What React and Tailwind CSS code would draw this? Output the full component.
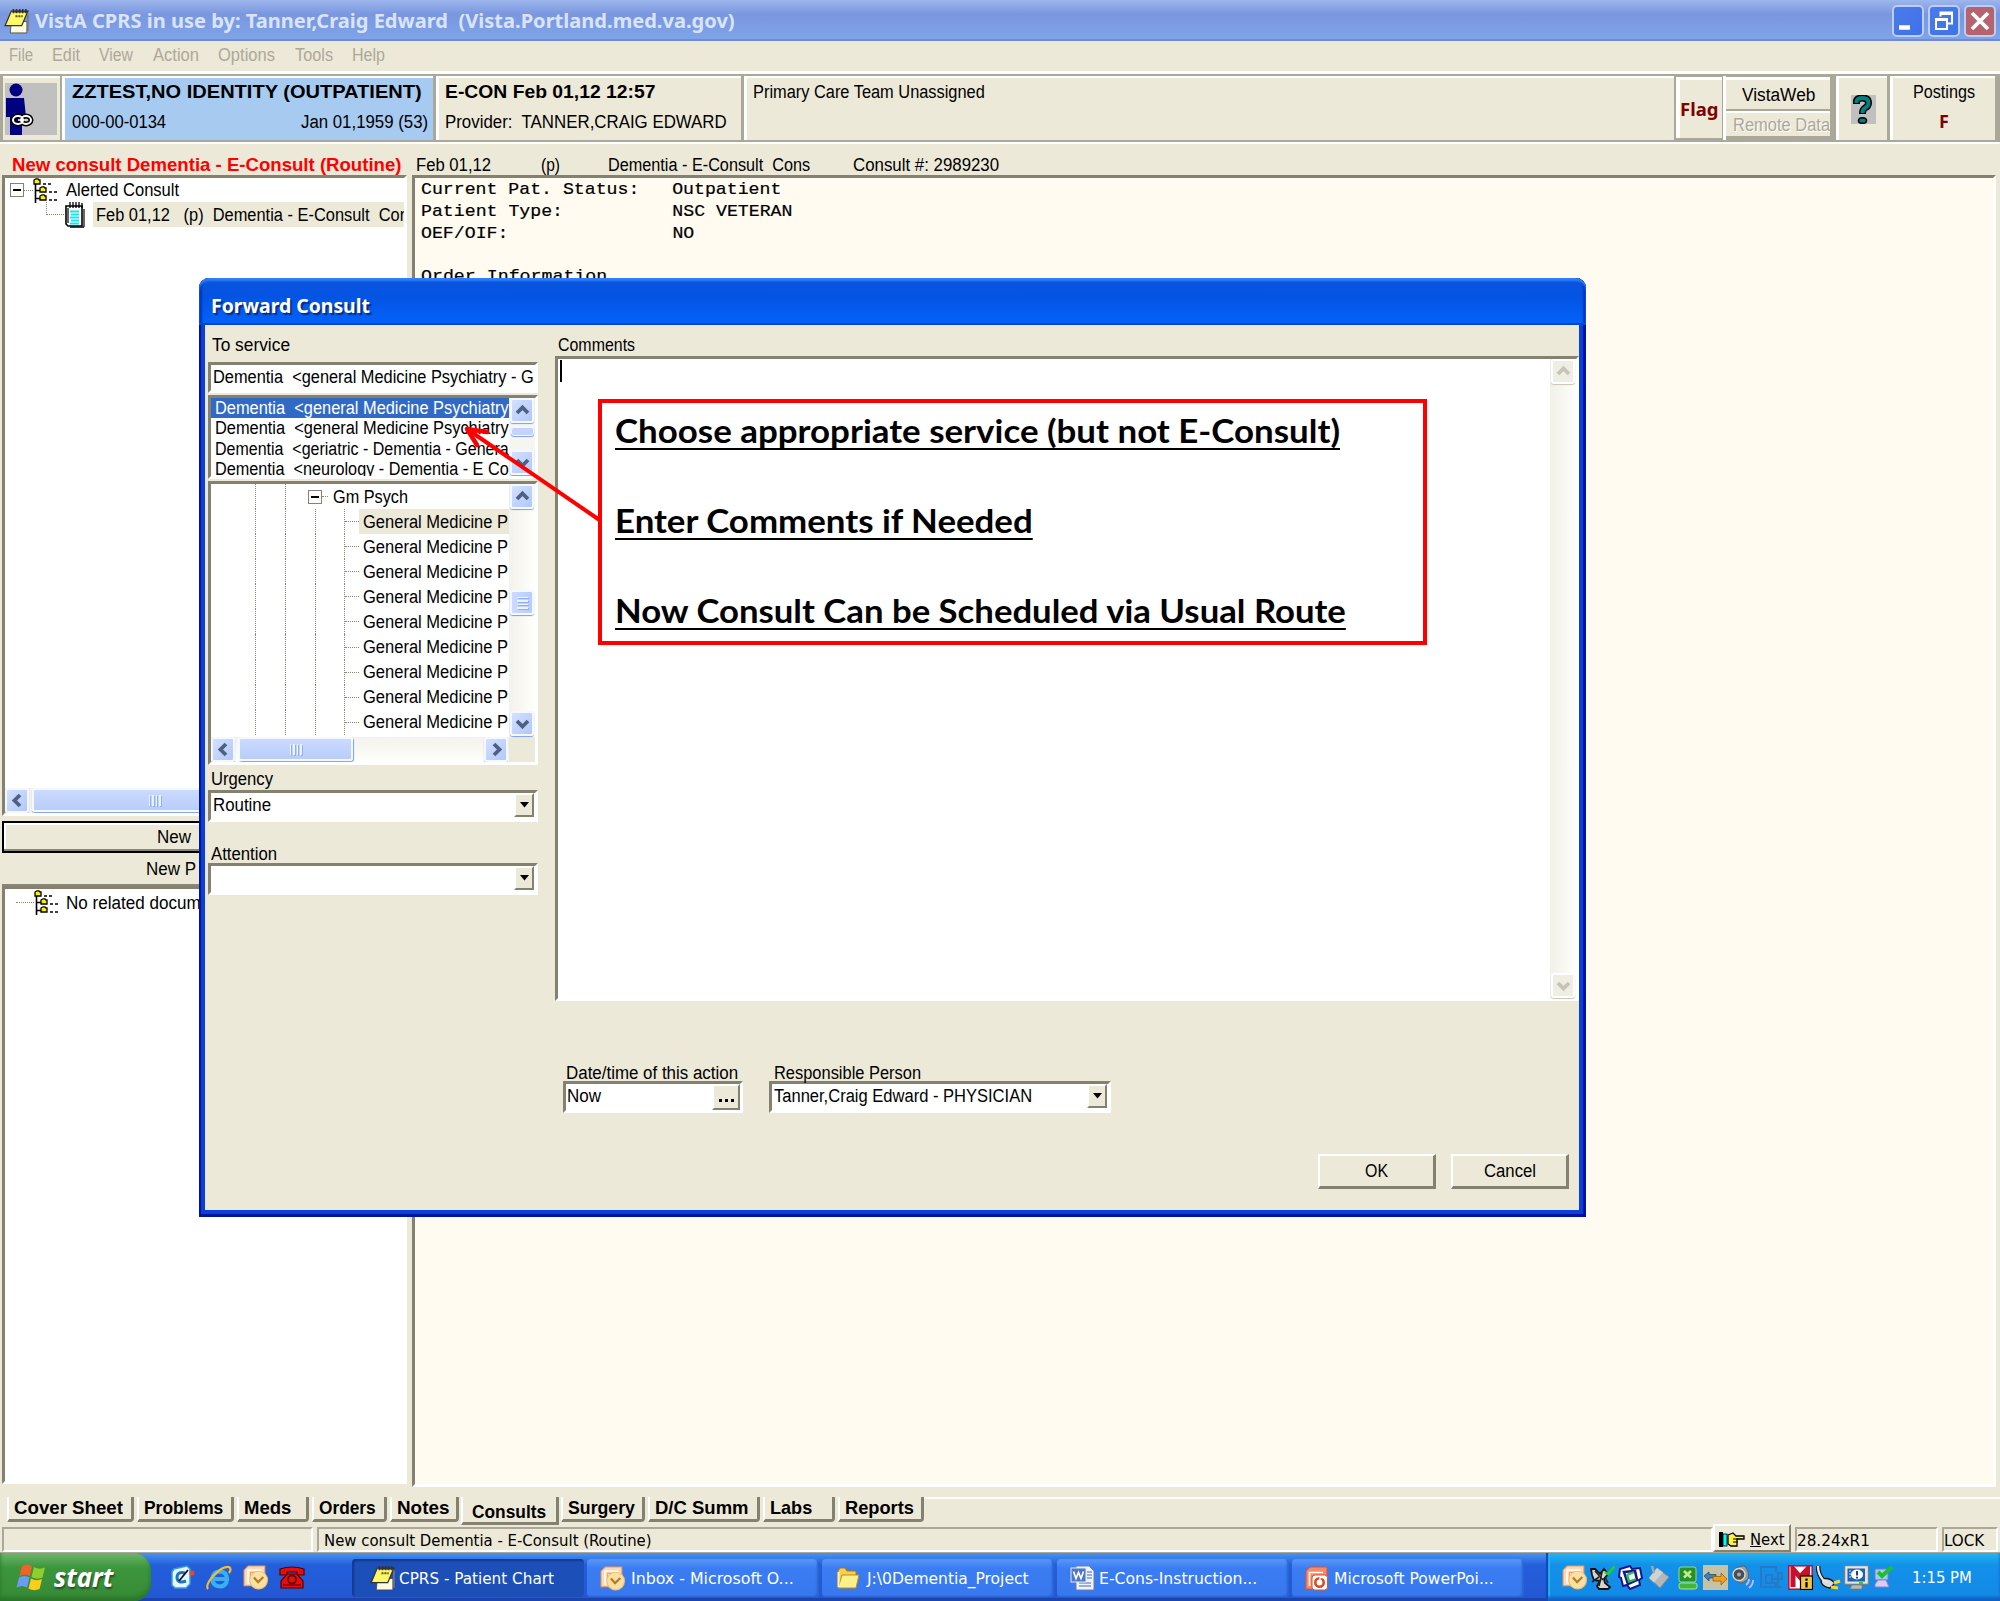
import React, { useLayoutEffect, useRef, useState } from "react";

/* Single line of text, condensed or stretched to a given width */
function Fit({ w, className = "", inner = "", children }) {
  const ref = useRef(null);
  const [scale, setScale] = useState(1);
  useLayoutEffect(() => {
    setScale(w / ref.current.offsetWidth);
  }, [w]);
  return (
    <span className={"inline-block shrink-0 whitespace-pre " + className} style={{ width: w }}>
      <span ref={ref} className={"inline-block origin-left whitespace-pre " + inner} style={{ transform: `scaleX(${scale})` }}>
        {children}
      </span>
    </span>
  );
}

const SUNKEN = "border-[3px] border-t-[#858170] border-l-[#858170] border-r-white border-b-white";
const RAISED = "border-[2px] border-t-white border-l-white border-r-[#858170] border-b-[#858170] bg-[#ece9d8]";
const TAHOMA = "font-['DejaVu_Sans_Condensed','DejaVu_Sans',sans-serif]";

const CHEVRONS = {
  up: "M6 14 L11.5 8.5 L17 14",
  down: "M6 9 L11.5 14.5 L17 9",
  left: "M14 6 L8.5 11.5 L14 17",
  right: "M9 6 L14.5 11.5 L9 17",
};

function ScrollBtn({ dir, disabled }) {
  return (
    <div
      className={
        "flex h-[25px] w-[24px] shrink-0 items-center justify-center rounded-[3px] border-2 " +
        (disabled
          ? "border-white bg-[#efede4] shadow-[0_1px_1px_#c9c5af]"
          : "border-[#f4f8ff] bg-gradient-to-br from-[#d3e0ff] to-[#b3c8f8] shadow-[0_1px_1px_#7f9fe0]")
      }
    >
      <svg width="23" height="23" viewBox="0 0 23 23" className="shrink-0">
        <path d={CHEVRONS[dir]} fill="none" stroke={disabled ? "#c6c4b8" : "#4d6185"} strokeWidth="3.8" />
      </svg>
    </div>
  );
}

function Notepad({ size = 27 }) {
  return (
    <svg width={size} height={size} viewBox="0 0 26 26" className="shrink-0">
      <path d="M8 13 H23 V24 H7 Z" fill="#fffbe0" stroke="#444" strokeWidth=".8" />
      <path d="M8 3 H24 L18 17 H2 Z" fill="#fff766" stroke="#333" strokeWidth="1.2" />
      <path d="M9 3.5 H24 M10 1 v4 M13 1 v4 M16 1 v4 M19 1 v4 M22 1 v4" stroke="#333" strokeWidth="1.5" />
      <path d="M12 8 H19" stroke="#5c5720" strokeWidth="2" strokeDasharray="2 .8" />
      <path d="M24 5 V22" stroke="#777" strokeWidth="1.5" />
    </svg>
  );
}

function TreeIcon() {
  return (
    <svg width="25" height="25" viewBox="0 0 25 25" className="shrink-0">
      <path d="M2.5 5 V25 M2.5 12.5 H8 M2.5 20.5 H8" stroke="#000" strokeWidth="1.6" fill="none" />
      <g fill="#ffef00" stroke="#000" strokeWidth="1.3">
        <path d="M1 2 L3 .8 H5 L6 2 H7 V6 H1 Z" />
        <path d="M7 10 L9 8.8 H11 L12 10 H13 V14 H7 Z" />
        <path d="M7 18 L9 16.8 H11 L12 18 H13 V22 H7 Z" />
      </g>
      <path d="M10 6 h3 M15 6 h3 M16 14 h3 M21 14 h3 M16 22 h3 M21 22 h3" stroke="#000" strokeWidth="1.6" />
    </svg>
  );
}

function DocIcon() {
  return (
    <svg width="22" height="26" viewBox="0 0 22 26" className="shrink-0">
      <path d="M2 4 H18 V24 H4 L2 22 Z" fill="#fff" stroke="#000" strokeWidth="1.6" />
      <path d="M4 6 V21 M20 7 V25 M6 25.2 H20" stroke="#000" strokeWidth="1.2" />
      <path d="M6 0 V6 M9 0 V6 M12 0 V6 M15 0 V6 M18 1 V6" stroke="#000" strokeWidth="1.3" />
      <path d="M6 9.5 H15 M7 12.5 H15 M6 15.5 H15 M7 18.5 H15 M6 21.5 H15" stroke="#14e6f0" strokeWidth="1.8" />
    </svg>
  );
}

function Outlook({ size = 25 }) {
  return (
    <svg width={size} height={size} viewBox="0 0 24 24" className="shrink-0">
      <path d="M5 1 H21 V20 H1 V5 Z" fill="#fbd9b5" stroke="#ee9a55" strokeWidth="1" />
      <path d="M4 4 H18 V8 H8 V18 H4 Z" fill="#fff" opacity=".8" />
      <path d="M7 17 V7 H14" fill="none" stroke="#f0a465" strokeWidth="1.3" />
      <circle cx="15" cy="14.500" r="8.500" fill="#fbe0a4" stroke="#ecc273" strokeWidth="1" />
      <path d="M10.500 12 L14.500 16.500 L19.500 11.500" fill="none" stroke="#b07c28" strokeWidth="2.2" />
    </svg>
  );
}

function Folder() {
  return (
    <svg width="24" height="25" viewBox="0 0 24 25" className="shrink-0">
      <path d="M2 5 L4 2 H9 L11 5 H20 V20 H2 Z" fill="#f6cf4f" stroke="#a97b14" />
      <path d="M2 22 L6 9 H23 L20 22 Z" fill="#fff08a" stroke="#b98c22" />
      <path d="M2.500 21 V6" stroke="#fff3b0" strokeWidth="2" />
    </svg>
  );
}

function Word() {
  return (
    <svg width="25" height="26" viewBox="0 0 25 26" className="shrink-0">
      <path d="M6 1 H19 L24 6 V25 H6 Z" fill="#eef3fc" stroke="#6b7fa8" />
      <path d="M17 7 H22 M17 10 H22 M17 13 H22 M9 18 H21 M9 21 H21" stroke="#7e98c9" strokeWidth="1.3" />
      <rect x="1" y="3" width="15" height="14" fill="#4f78c8" stroke="#dfe8f8" />
      <path d="M3.5 6.5 L6 13.5 L8.5 7.5 L11 13.5 L13.5 6.5" fill="none" stroke="#fff" strokeWidth="1.7" />
    </svg>
  );
}

function Ppt() {
  return (
    <svg width="24" height="25" viewBox="0 0 24 25" className="shrink-0">
      <path d="M5 1 H22 V23 H1 V5 Z" fill="#f58a66" stroke="#e0522a" />
      <path d="M4.500 20 V6.500 H18" fill="none" stroke="#fff" strokeWidth="1.6" />
      <rect x="7" y="9" width="15.500" height="15" rx="3" fill="#fff" stroke="#e0522a" />
      <circle cx="14.500" cy="16.500" r="4.200" fill="none" stroke="#dd4a20" strokeWidth="2.600" />
      <path d="M15 16 V11.500 H20" stroke="#fff" strokeWidth="1.400" fill="none" />
    </svg>
  );
}

function WinFlag() {
  return (
    <svg width="30" height="29" viewBox="0 0 30 29" className="shrink-0">
      <path d="M6 3 Q11 0 16 3 L14 13 Q9 10 3.5 13 Z" fill="#f0622a" />
      <path d="M18 4 Q23 7 29 4.5 L26.5 14.5 Q21 17 15.5 14 Z" fill="#8fce2c" />
      <path d="M3 14.5 Q8.500 11.500 13.500 14.500 L11 24.500 Q6 21.500 .5 24.500 Z" fill="#6b9cf5" />
      <path d="M15 15.500 Q20.500 18.500 26 16 L23.500 26 Q18 28.500 12.500 25.500 Z" fill="#fccd1c" />
    </svg>
  );
}

function TrayIcons() {
  const box = "h-[25px] w-[25px] shrink-0";
  return (
    <div className="flex items-center gap-[3.2px]">
      <Outlook size={25} />
      <svg className={box} viewBox="0 0 25 25">
        <path d="M1 4 L5 4 L10 9 L14 4 L18 9 L14 14 L15 18 L20 22 L18 24 H9 L7 21 L10 16 L4 15 L2 10 Z" fill="#d4d4d4" stroke="#111" strokeWidth="1.800" />
        <path d="M5 6 L13 15 M2 17 L9 12 M12 7 L9 21 M15 12 L18 18" stroke="#222" strokeWidth="1.600" />
        <path d="M15 7 L18 9 L25 1" fill="none" stroke="#1ed21e" strokeWidth="2.600" />
      </svg>
      <svg className={box} viewBox="0 0 25 25">
        <path d="M2 4 L12 1 L14 4 L22 3 L24 13 L21 15 L22 20 L12 24 L9 20 L5 21 L3 13 L1 12 Z" fill="#fff" stroke="#16168c" strokeWidth="2" />
        <path d="M6 7 L17 6 L19 15 L10 19 Z" fill="none" stroke="#16168c" strokeWidth="2.600" />
        <path d="M9 10 L16 7 M10 17 L18 14 M9 10 L11 16" stroke="#23c04a" strokeWidth="2.400" />
      </svg>
      <svg className={box} viewBox="0 0 25 25">
        <path d="M10 3 L22 12 L13 23 L2 13 Z" fill="#b4b7ba" stroke="#85898d" />
        <path d="M10 3 L16 7.500 L7 17.500 L2 13 Z" fill="#cfd1d2" />
        <path d="M5 1 L7 8" stroke="#a5a8aa" strokeWidth="2.400" />
      </svg>
      <svg className={box} viewBox="0 0 25 25">
        <rect x="4" y="2" width="17" height="15" rx="2" fill="#2a8f2a" stroke="#8be27b" />
        <path d="M9 6 L16 12.500 M16 6 L9 12.500" stroke="#b9ef8c" strokeWidth="2.600" />
        <rect x="4" y="18" width="18" height="6" rx="2" fill="#46b53a" stroke="#9bea8b" />
      </svg>
      <svg className={box} viewBox="0 0 25 25">
        <rect width="25" height="25" fill="#c5c2a6" />
        <path d="M1 11 L6 7 V9.500 H13 V13 H6 V16 Z" fill="#3d83b8" stroke="#1d4a77" strokeWidth=".8" />
        <path d="M24 14 L18 8 V11.500 H10 V16 H18 V20 Z" fill="#f0a01e" stroke="#9c6208" strokeWidth=".8" />
      </svg>
      <svg className={box} viewBox="0 0 25 25">
        <path d="M2 6 Q6 1 13 1 Q19 6 17 14 Q13 18 9 18 Q2 14 2 6 Z" fill="#9a9ea3" stroke="#5e6165" />
        <circle cx="8" cy="9.500" r="6" fill="#4b4e52" stroke="#d6d8da" strokeWidth="1.400" />
        <circle cx="8" cy="9.500" r="2" fill="#aaa" />
        <path d="M15 20 Q18 18 18 14 M18 23 Q22 20 22 15" fill="none" stroke="#c9b8ff" strokeWidth="1.800" />
      </svg>
      <svg className={box} viewBox="0 0 25 25">
        <path d="M17 7 V2 H2 V22 H17 V18 H7 V10 H13 V18 M13 14 H23 V8 H19 V22 H23" fill="none" stroke="#2679c4" strokeWidth="2" />
      </svg>
      <svg className={box} viewBox="0 0 25 25">
        <rect x=".8" y=".8" width="23.400" height="23.400" fill="#fff" stroke="#c8102e" strokeWidth="1.600" />
        <path d="M5 22 V4 L12 12 L19.500 4 V22" fill="none" stroke="#c8102e" strokeWidth="5" />
        <rect x="12.500" y="11" width="12" height="13.500" fill="#f3c53c" stroke="#000" strokeWidth="1.200" />
        <path d="M18.500 13.500 v2.200 M18.500 17 v5.500" stroke="#000" strokeWidth="2.200" />
      </svg>
      <svg className={box} viewBox="0 0 25 25">
        <path d="M2 1 Q2 9 7 15 L17 20" fill="none" stroke="#111" strokeWidth="4.600" />
        <path d="M7 14 Q13 12 19 18 L14 23 Q7 22 5 17 Z" fill="#ddd" stroke="#111" strokeWidth="1.300" />
        <path d="M2 1 Q2 9 7 15 L12 17" fill="none" stroke="#e6e6e6" strokeWidth="2.400" />
        <path d="M18 18 L24 16 M15 22 L22 23" stroke="#f2d43a" strokeWidth="3.200" />
      </svg>
      <svg className={box} viewBox="0 0 25 25">
        <rect x=".7" y=".7" width="23.600" height="18.500" fill="#e7e5dc" stroke="#7d7b73" />
        <rect x="3.500" y="3.500" width="17.500" height="13" fill="#1c62b8" />
        <ellipse cx="13" cy="9.500" rx="6" ry="5" fill="#fff" />
        <path d="M13 6 v4.500 M13 11.800 v1.600" stroke="#1440a0" strokeWidth="2" />
        <path d="M5 6 h2 M5 9 h2 M5 12 h2" stroke="#cfe2ff" />
        <path d="M8 20 H18 V24 H6 Z" fill="#bdbbb2" stroke="#7d7b73" strokeWidth=".8" />
        <path d="M15 18 h4" stroke="#25d32e" strokeWidth="2" />
      </svg>
      <svg className={box} viewBox="0 0 25 25">
        <rect x="3" y="4" width="13" height="11" rx="1" fill="#a9c9f0" stroke="#7c74c4" />
        <path d="M3 19 L6 15 H14 L17 22 H3 Z" fill="#d9cdf5" stroke="#8b7fce" />
        <path d="M6 7 L10 11 L20 2" fill="none" stroke="#16c427" strokeWidth="4" />
      </svg>
    </div>
  );
}

function TitleBtn({ children, red }) {
  return (
    <div
      className={
        "flex h-[32px] w-[32px] items-center justify-center rounded-[5px] border-2 border-[#bccdf6] " +
        (red ? "bg-[#b5646f]" : "bg-gradient-to-br from-[#4a7bea] to-[#3f72e8]")
      }
    >
      <svg width="28" height="28" viewBox="0 0 28 28">{children}</svg>
    </div>
  );
}

function ComboArrow() {
  return (
    <div className={"flex h-[24px] w-[20px] shrink-0 items-center justify-center " + RAISED}>
      <svg width="9" height="6" viewBox="0 0 9 6">
        <path d="M0 0 H9 L4.500 5.500 Z" fill="#000" />
      </svg>
    </div>
  );
}

const MENUS = [
  ["File", 24, "ml-[9px]"],
  ["Edit", 28, "ml-[19px]"],
  ["View", 34, "ml-[19px]"],
  ["Action", 46, "ml-[20px]"],
  ["Options", 57, "ml-[19px]"],
  ["Tools", 38, "ml-[20px]"],
  ["Help", 33, "ml-[19px]"],
];

function MainHeader() {
  return (
    <>
      <div className="flex h-[41px] items-center bg-gradient-to-b from-[#9db6ec] via-[#7a96df] via-35% to-[#7fa5e8] pt-[1px] pr-[4px] pl-[3px] shadow-[inset_0_-2px_0_#7288d8]">
        <Notepad />
        <Fit w={700} className="ml-[5px] font-['Noto_Sans','Open_Sans',sans-serif] text-[20px] leading-6 font-bold text-[#d9e4f9]">
          {"VistA CPRS in use by: Tanner,Craig Edward  (Vista.Portland.med.va.gov)"}
        </Fit>
        <div className="ml-auto flex gap-[4px]">
          <TitleBtn><path d="M5 20.500 H16" stroke="#fff" strokeWidth="4.500" /></TitleBtn>
          <TitleBtn>
            <path d="M10.500 9.500 V5.500 H22 V16.500 H18" fill="none" stroke="#fff" strokeWidth="2" />
            <path d="M10 6.500 H22" stroke="#fff" strokeWidth="3" />
            <rect x="6" y="12" width="11" height="10" fill="none" stroke="#fff" strokeWidth="2" />
            <path d="M5 12.500 H18" stroke="#fff" strokeWidth="3" />
          </TitleBtn>
          <TitleBtn red><path d="M6 6 L22 22 M22 6 L6 22" stroke="#fff" strokeWidth="3.800" /></TitleBtn>
        </div>
      </div>
      <div className="flex h-[30px] items-center pb-[2px] text-[#aca899]">
        {MENUS.map(([t, w, m]) => <Fit key={t} w={w} className={m}>{t}</Fit>)}
      </div>
      <div className="h-[5px] border-b-2 border-[#aca899] bg-white" />
      <div className="flex h-[64px] bg-[#aca899] pl-[3px]">
        <div className="flex w-[57px] items-center border-t-2 border-white bg-[#ece9d8] pl-[2px]">
          <svg width="52" height="52" viewBox="0 0 52 52">
            <rect width="52" height="52" fill="#c0c0c0" />
            <circle cx="11" cy="7" r="6.500" fill="#000080" />
            <path d="M1 15 H19 L21 34 H17 V52 H5 V34 H1 Z" fill="#000080" />
            <g fill="none" stroke="#000" strokeWidth="5"><ellipse cx="13" cy="37" rx="5" ry="4" /><ellipse cx="21" cy="37" rx="5" ry="4" /></g>
            <g fill="none" stroke="#fff" strokeWidth="2"><ellipse cx="13" cy="37" rx="5" ry="4" /><ellipse cx="21" cy="37" rx="5" ry="4" /></g>
            <path d="M13 37 h8" stroke="#fff" strokeWidth="1.500" />
          </svg>
        </div>
        <div className="ml-[2px] flex w-[371px] flex-col border-t-2 border-l-3 border-white bg-[#a6caf0] pt-[2px] pr-[5px] pl-[7px]">
          <Fit w={350} className="text-[18.500px] leading-[24px] font-bold">ZZTEST,NO IDENTITY (OUTPATIENT)</Fit>
          <div className="mt-[6px] flex justify-between leading-[24px]">
            <Fit w={94}>000-00-0134</Fit>
            <Fit w={127}>Jan 01,1959 (53)</Fit>
          </div>
        </div>
        <div className="ml-[3px] flex w-[305px] flex-col border-t-2 border-l-3 border-white bg-[#ece9d8] pt-[2px] pl-[6px]">
          <Fit w={211} className="text-[18.500px] leading-[24px] font-bold">E-CON Feb 01,12 12:57</Fit>
          <Fit w={282} className="mt-[6px] leading-[24px]">{"Provider:  TANNER,CRAIG EDWARD"}</Fit>
        </div>
        <div className="ml-[3px] w-[930px] border-t-2 border-l-3 border-white bg-[#ece9d8] pt-[2px] pl-[6px]">
          <Fit w={232} className="leading-[24px]">Primary Care Team Unassigned</Fit>
        </div>
        <div className="mt-[1px] ml-[2px] mb-[2px] flex w-[46px] items-center border-t-3 border-l-4 border-white bg-[#ece9d8]">
          <Fit w={38} className="font-['Noto_Sans',sans-serif] text-[18px] leading-6 font-bold text-[#800000]">Flag</Fit>
        </div>
        <div className="ml-[1px] flex w-[107px] flex-col gap-[2px] border-l-3 border-white pt-[1px]">
          <div className="flex h-[32px] items-center justify-center border-t-3 border-white bg-[#ece9d8]">
            <Fit w={73}>VistaWeb</Fit>
          </div>
          <div className="flex h-[25px] items-center overflow-hidden border-t-2 border-white bg-[#ece9d8] pl-[7px]">
            <Fit w={97} className="text-[#aca899] [text-shadow:1px_1px_0_#fff]">Remote Data</Fit>
          </div>
        </div>
        <div className="ml-[6px] flex w-[51px] items-center justify-center border-t-2 border-l-3 border-white bg-[#ece9d8]">
          <svg width="25" height="29" viewBox="0 0 25 29">
            <rect width="25" height="29" fill="#c0c0c0" />
            <path d="M5.500 9 V6 Q6 3 11.500 3 Q17.500 3 17.500 8 Q17.500 11 14 13 Q11.500 14.500 11.500 19" fill="none" stroke="#000" strokeWidth="7" />
            <path d="M5.500 8 V6.500 Q6 3 11.500 3 Q17.500 3 17.500 8 Q17.500 11 14 13 Q11.500 14.500 11.500 18" fill="none" stroke="#008080" strokeWidth="4" />
            <ellipse cx="11.500" cy="25.500" rx="4" ry="2.800" fill="#008080" stroke="#000" strokeWidth="1.500" />
          </svg>
        </div>
        <div className="ml-[3px] flex w-[105px] flex-col items-center border-t-2 border-l-3 border-white bg-[#ece9d8] pt-[2px]">
          <Fit w={62} className="leading-[24px]">Postings</Fit>
          <span className="mt-[5px] font-['Noto_Sans',sans-serif] text-[18px] leading-[24px] font-bold text-[#800000]">F</span>
        </div>
      </div>
      <div className="h-[4px] border-t-2 border-b-2 border-t-[#aca899] border-b-white" />
      <div className="flex h-[31px] items-center pt-[10px] pl-[12px] leading-5">
        <Fit w={389} className="text-[18.500px] font-bold text-[#ff0000]">New consult Dementia - E-Consult (Routine)</Fit>
        <Fit w={75} className="ml-[15px]">Feb 01,12</Fit>
        <Fit w={19} className="ml-[50px]">(p)</Fit>
        <Fit w={202} className="ml-[48px]">{"Dementia - E-Consult  Cons"}</Fit>
        <Fit w={146} className="ml-[43px]">Consult #: 2989230</Fit>
      </div>
    </>
  );
}

function LeftPane() {
  return (
    <div className="flex w-[405px] shrink-0 flex-col">
      <div className={"flex h-[641px] flex-col overflow-hidden bg-white " + SUNKEN}>
        <div className="flex h-[24px] items-center pl-[5px]">
          <div className="flex h-[14px] w-[14px] items-center justify-center border border-[#848270]">
            <div className="h-[2px] w-[8px] bg-black" />
          </div>
          <div className="w-[9px] border-t border-dotted border-[#8a8677]" />
          <TreeIcon />
          <Fit w={113} className="ml-[8px]">Alerted Consult</Fit>
        </div>
        <div className="flex h-[25px] items-center pl-[41px]">
          <div className="h-[13px] w-[18px] self-start border-b border-l border-dotted border-[#8a8677]" />
          <DocIcon />
          <div className="ml-[7px] flex h-[25px] w-[312px] items-center overflow-hidden bg-[#ece9d8] pl-[3px]">
            <Fit w={309}>{"Feb 01,12   (p)  Dementia - E-Consult  Cor"}</Fit>
          </div>
        </div>
        <div className="mt-auto flex h-[25px] gap-[3px] bg-[#f3f2ec]">
          <ScrollBtn dir="left" />
          <div className="flex h-[24px] w-[245px] items-center justify-center rounded-[3px] border-2 border-[#f4f8ff] bg-gradient-to-b from-[#cbdaff] to-[#b9cdfa] shadow-[0_1px_1px_#7f9fe0]">
            <div className="flex gap-[2px]">
              {[0, 1, 2, 3].map((i) => <div key={i} className="h-[11px] w-[1.500px] bg-[#eef4ff] shadow-[1px_1px_0_#8cb0f8]" />)}
            </div>
          </div>
        </div>
      </div>
      <div className="mt-[5px] flex h-[32px] items-center border-2 border-black bg-[#ece9d8] pl-[153px] shadow-[inset_0_-2px_0_#8b8778,inset_2px_2px_0_#fff]">
        <Fit w={34}>New</Fit>
      </div>
      <div className="mt-[1px] flex h-[32px] items-center border-b-2 border-[#8b8778] pl-[144px]">
        <Fit w={50}>New P</Fit>
      </div>
      <div className={"flex h-[598px] flex-col bg-white " + SUNKEN}>
        <div className="mt-[1px] flex h-[25px] items-center pl-[11px]">
          <div className="w-[18px] border-t border-dotted border-[#8a8677]" />
          <TreeIcon />
          <Fit w={144} className="ml-[7px]">No related docume</Fit>
        </div>
      </div>
    </div>
  );
}

const REPORT = [
  "Current Pat. Status:   Outpatient",
  "Patient Type:          NSC VETERAN",
  "OEF/OIF:               NO",
  " ",
  "Order Information",
];

function ReportPane() {
  return (
    <div className={"ml-[5px] flex h-[1312px] w-[1584px] flex-col bg-[#fffbf0] pt-[1px] pl-[6px] " + SUNKEN}>
      {REPORT.map((t, i) => (
        <Fit key={i} w={t.length * 10.93} className="h-[21.800px] font-['Liberation_Mono',monospace] text-[17px] leading-[22px] [-webkit-text-stroke:0.2px_#000]">{t}</Fit>
      ))}
    </div>
  );
}

const TABS = [
  ["Cover Sheet", 109, "w-[127px]"],
  ["Problems", 79, "w-[97px] ml-[3px]"],
  ["Meds", 47, "w-[72px] ml-[3px]"],
  ["Orders", 57, "w-[75px] ml-[3px]"],
  ["Notes", 52, "w-[69px] ml-[3px]"],
  ["Consults", 74, ""],
  ["Surgery", 67, "w-[84px] ml-[2px]"],
  ["D/C Summ", 94, "w-[112px] ml-[3px]"],
  ["Labs", 42, "w-[72px] ml-[3px]"],
  ["Reports", 69, "w-[86px] ml-[3px]"],
];

function BottomTabs() {
  return (
    <div className="flex h-[40px] items-start pt-[10px] pl-[7px] text-[18.500px] font-bold">
      {TABS.map(([t, w, c]) =>
        t === "Consults" ? (
          <div key={t} className="ml-[2px] flex h-[28px] w-[98px] items-center border-r-3 border-b-3 border-l-2 border-r-[#858170] border-b-[#858170] border-l-white pt-[4px] pl-[9px]">
            <Fit w={w}>{t}</Fit>
          </div>
        ) : (
          <div key={t} className={"flex h-[25px] items-center rounded-br-[4px] border-r-3 border-b-3 border-l-2 border-r-[#858170] border-b-[#858170] border-l-white pl-[5px] " + c}>
            <Fit w={w}>{t}</Fit>
          </div>
        )
      )}
      <div className="h-[2px] flex-1 bg-white" />
    </div>
  );
}

function StatusBar() {
  const cell = "h-[25px] border-2 border-t-[#aca899] border-l-[#aca899] border-r-white border-b-white flex items-center pt-[2px]";
  return (
    <div className="flex h-[26px] items-start border-b border-[#aca899] pl-[2px]">
      <div className={cell + " w-[311px]"} />
      <div className={cell + " ml-[4px] w-[1396px] pl-[5px]"}>
        <Fit w={328} className="font-['DejaVu_Sans_Condensed',sans-serif] text-[16px]">New consult Dementia - E-Consult (Routine)</Fit>
      </div>
      <div className={"-mt-[3px] flex h-[28px] w-[78px] items-center pt-[3px] pl-[4px] " + RAISED}>
        <svg width="26" height="18" viewBox="0 0 26 18">
          <rect x="0" y="1" width="4" height="15" fill="#000" />
          <rect x="4" y="3" width="4" height="12" fill="#0ff" stroke="#000" strokeWidth=".8" />
          <path d="M9 4 L14 2 L17 5 H25 V8 H18 V15 H12 L9 13 Z" fill="#ffef4a" stroke="#000" strokeWidth="1.300" />
          <path d="M14 8 H19 M14 11 H19" stroke="#000" />
        </svg>
        <Fit w={35} className="ml-[5px] font-['DejaVu_Sans_Condensed',sans-serif] text-[16px]"><span className="underline">N</span>ext</Fit>
      </div>
      <div className={cell + " ml-[4px] w-[143px]"}>
        <Fit w={73} className="font-['DejaVu_Sans_Condensed',sans-serif] text-[16px]">28.24xR1</Fit>
      </div>
      <div className={cell + " ml-[4px] w-[56px]"}>
        <Fit w={40} className="font-['DejaVu_Sans_Condensed',sans-serif] text-[16px]">LOCK</Fit>
      </div>
    </div>
  );
}

const TASKS = [
  ["CPRS - Patient Chart", 155, <Notepad key="i" />, true, "pl-[17px] gap-[3px]"],
  ["Inbox - Microsoft O...", 163, <Outlook key="i" />, false, "pl-[13px] gap-[6px]"],
  ["J:\\0Dementia_Project", 162, <Folder key="i" />, false, "pl-[14px] gap-[7px]"],
  ["E-Cons-Instruction...", 158, <Word key="i" />, false, "pl-[13px] gap-[4px]"],
  ["Microsoft PowerPoi...", 160, <Ppt key="i" />, false, "pl-[13px] gap-[5px]"],
];

function Taskbar() {
  return (
    <div className="flex h-[48px] bg-gradient-to-b from-[#4a94f0] via-[#245edb] via-25% to-[#2257d2] shadow-[inset_0_-3px_0_#1b44ae]">
      <div className="flex h-[48px] w-[151px] items-center rounded-r-[18px] bg-gradient-to-b from-[#6fb56d] via-[#3c963c] via-30% to-[#378a36] pl-[16px] shadow-[inset_0_-4px_4px_#2a742a]">
        <WinFlag />
        <Fit w={59} className="ml-[8px] font-['Noto_Sans',sans-serif] text-[27px] leading-[30px] font-bold text-white italic [text-shadow:1px_2px_2px_#234f23]">start</Fit>
      </div>
      <div className="flex w-[201px] items-center gap-[11px] pt-[1px] pl-[19px]">
        <svg width="25" height="25" viewBox="0 0 25 25">
          <path d="M4 4 L17 1 L20 4 V19 L16 23 H5 L2 20 V7 Z" fill="#e8f6ff" stroke="#35a0dc" strokeWidth="1.500" />
          <path d="M15 8 Q7 6 7 13 Q8 19 16 16" fill="none" stroke="#1878c6" strokeWidth="3" />
          <path d="M9 16 L18 5" stroke="#111" strokeWidth="1.800" />
          <circle cx="22" cy="8" r="2.500" fill="#ef4722" />
        </svg>
        <svg width="26" height="26" viewBox="0 0 26 26">
          <path d="M21 16 Q19 21.500 14 21.500 Q6.500 21 6.500 14 Q7 6.500 14 6.500 Q21 7 21 14 H8" fill="none" stroke="#38b0f2" strokeWidth="4.200" />
          <path d="M2 24 Q-1 20 8 10 Q17 1 23 2 Q26 4 23 8" fill="none" stroke="#f3bd2c" strokeWidth="2.200" />
        </svg>
        <Outlook size={25} />
        <svg width="26" height="24" viewBox="0 0 26 24">
          <path d="M1 3 Q13 -1 25 3 V9 H18 V6 H8 V9 H1 Z" fill="#e80c0c" stroke="#500" strokeWidth="1.200" />
          <path d="M8 8 H18 L24 15 V22 H2 V15 Z" fill="#e80c0c" stroke="#500" strokeWidth="1.200" />
          <circle cx="13" cy="13.500" r="4" fill="none" stroke="#400" strokeWidth="1.600" />
          <path d="M4 19 H22" stroke="#700" strokeWidth="1.300" />
        </svg>
      </div>
      <div className="flex items-start gap-[3px] pt-[6px]">
        {TASKS.map(([t, w, icon, active, c]) => (
          <div
            key={t}
            className={
              "flex h-[38px] w-[232px] items-center rounded-[4px] " + c + " " +
              (active
                ? "bg-[#1d4fb8] shadow-[inset_2px_2px_2px_#143a8c]"
                : "bg-gradient-to-b from-[#5a97f8] via-[#3a7cf2] via-25% to-[#3878ee] shadow-[inset_-2px_-1px_2px_#2a62d0]")
            }
          >
            {icon}
            <Fit w={w} className={"pt-[2px] text-[16.500px] leading-6 text-white " + TAHOMA}>{t}</Fit>
          </div>
        ))}
      </div>
      <div className="ml-auto flex h-[48px] w-[454px] items-center border-l-2 border-[#0b4cb8] bg-gradient-to-b from-[#25b4f2] via-[#1391e9] via-25% to-[#1289e6] pl-[14px] shadow-[inset_0_-4px_3px_#0f62c4,inset_2px_0_1px_#35c3f8]">
        <TrayIcons />
        <Fit w={60} className={"ml-[15px] pt-[2px] text-[16.500px] leading-6 text-white " + TAHOMA}>1:15 PM</Fit>
      </div>
    </div>
  );
}

const MATCHES = [
  ["Dementia  <general Medicine Psychiatry", 294],
  ["Dementia  <general Medicine Psychiatry", 294],
  ["Dementia  <geriatric - Dementia - Genera", 294],
  ["Dementia  <neurology - Dementia - E Co", 294],
];

function ServiceTree() {
  const guide = "h-full border-l border-dotted border-[#8a8677]";
  return (
    <div className={"mt-[2px] flex h-[284px] w-[330px] flex-col overflow-hidden bg-[#ece9d8] " + SUNKEN}>
      <div className="flex h-[253px] shrink-0">
        <div className="w-[298px] shrink-0 overflow-hidden bg-white">
          <div className="flex h-[25px] items-center pl-[44px]">
            <div className={guide + " w-[30px]"} />
            <div className={guide + " w-[23px]"} />
            <div className="flex h-[14px] w-[14px] items-center justify-center border border-[#848270] bg-white">
              <div className="h-[2px] w-[8px] bg-black" />
            </div>
            <div className="w-[6px] border-t border-dotted border-[#8a8677]" />
            <Fit w={75} className="ml-[5px]">Gm Psych</Fit>
          </div>
          {Array.from({ length: 9 }, (_, i) => (
            <div key={i} className="flex h-[25.100px] items-center pl-[44px]">
              <div className={guide + " w-[30px]"} />
              <div className={guide + " w-[30px]"} />
              <div className={guide + " w-[29px]"} />
              <div className={guide + " flex w-[15px] items-center"}>
                <div className="w-[14px] border-t border-dotted border-[#8a8677]" />
              </div>
              <div className={"flex h-[25px] flex-1 items-center pl-[4px] " + (i === 0 ? "bg-[#ece9d8]" : "")}>
                <Fit w={145}>General Medicine P</Fit>
              </div>
            </div>
          ))}
        </div>
        <div className="flex w-[26px] flex-col items-center bg-gradient-to-r from-[#f3f2ec] to-[#fefefb]">
          <ScrollBtn dir="up" />
          <div className="mt-[81px] flex h-[25px] w-[24px] flex-col items-center justify-center gap-[2px] rounded-[3px] border-2 border-[#f4f8ff] bg-gradient-to-r from-[#cbdaff] to-[#b9cdfa] shadow-[0_1px_1px_#7f9fe0]">
            {[0, 1, 2, 3].map((i) => <div key={i} className="h-[1.500px] w-[11px] bg-[#eef4ff] shadow-[1px_1px_0_#8cb0f8]" />)}
          </div>
          <div className="mt-auto mb-[1px]"><ScrollBtn dir="down" /></div>
        </div>
      </div>
      <div className="flex h-[25px] w-[298px] gap-[3px] bg-gradient-to-b from-[#f3f2ec] to-[#fefefb]">
        <ScrollBtn dir="left" />
        <div className="flex h-[24px] w-[115px] items-center justify-center rounded-[3px] border-2 border-[#f4f8ff] bg-gradient-to-b from-[#cbdaff] to-[#b9cdfa] shadow-[1px_1px_1px_#7f9fe0]">
          <div className="flex gap-[2px]">
            {[0, 1, 2, 3].map((i) => <div key={i} className="h-[11px] w-[1.500px] bg-[#eef4ff] shadow-[1px_1px_0_#8cb0f8]" />)}
          </div>
        </div>
        <div className="mr-[1px] ml-auto"><ScrollBtn dir="right" /></div>
      </div>
    </div>
  );
}

function ForwardDialog() {
  return (
    <div className="absolute top-[278px] left-[199px] flex h-[939px] w-[1387px] flex-col rounded-t-[10px] bg-[#0a3fd8] shadow-[inset_2px_-3px_0_#0213a0,inset_-3px_0_0_#0213a0]">
      <div className="flex h-[47px] items-center rounded-t-[10px] bg-gradient-to-b from-[#0a54dc] via-[#0454e4] via-40% to-[#0263fb] pt-[8px] pl-[12px] shadow-[inset_0_3px_2px_#2f7ff8,inset_0_-2px_0_#0148c8,inset_3px_0_2px_#0235c0,inset_-3px_0_2px_#0235c0]">
        <Fit w={159} className="font-['Noto_Sans',sans-serif] text-[20px] leading-6 font-bold text-white [text-shadow:2px_2px_1px_#0a2c86]">Forward Consult</Fit>
      </div>
      <div className="mr-[7px] mb-[7px] ml-[6px] flex flex-1 bg-[#ece9d8]">
        <div className="flex w-[350px] shrink-0 flex-col pl-[3px]">
          <div className="h-[37px] pt-[8px] pl-[4px] leading-6"><Fit w={78}>To service</Fit></div>
          <div className={"flex h-[31px] w-[330px] items-center overflow-hidden bg-white pb-[2px] pl-[2px] " + SUNKEN}>
            <Fit w={321}>{"Dementia  <general Medicine Psychiatry - G"}</Fit>
          </div>
          <div className={"mt-[2px] flex h-[84px] w-[330px] overflow-hidden bg-white " + SUNKEN}>
            <div className="h-[78px] w-[298px] shrink-0 overflow-hidden">
              {MATCHES.map(([t, w], i) => (
                <div key={i} className={"flex h-[20.300px] items-center pl-[4px] leading-5 " + (i === 0 ? "bg-[#316ac5] text-white" : "")}>
                  <Fit w={w}>{t}</Fit>
                </div>
              ))}
            </div>
            <div className="flex w-[26px] flex-col items-center bg-[#f6f5f0]">
              <ScrollBtn dir="up" />
              <div className="mt-[4px] h-[9px] w-[23px] rounded-[3px] border border-[#f4f8ff] bg-[#c3d3fd] shadow-[0_1px_1px_#7f9fe0]" />
              <div className="mt-auto mb-[1px]"><ScrollBtn dir="down" /></div>
            </div>
          </div>
          <ServiceTree />
          <div className="h-[25px] pt-[2px] pl-[3px] leading-6"><Fit w={62}>Urgency</Fit></div>
          <div className={"flex h-[32px] w-[330px] bg-white pl-[2px] " + SUNKEN}>
            <Fit w={58} className="leading-6">Routine</Fit>
            <div className="mr-[1px] ml-auto"><ComboArrow /></div>
          </div>
          <div className="h-[41px] pt-[20px] pl-[3px] leading-6"><Fit w={66}>Attention</Fit></div>
          <div className={"flex h-[32px] w-[330px] bg-white " + SUNKEN}>
            <div className="mr-[1px] ml-auto"><ComboArrow /></div>
          </div>
        </div>
        <div className="flex flex-1 flex-col">
          <div className="h-[31px] pt-[8px] pl-[3px] leading-6"><Fit w={77}>Comments</Fit></div>
          <div className={"flex h-[645px] bg-white " + SUNKEN}>
            <div className="mt-[1px] ml-[2px] h-[22px] w-[1.500px] bg-black" />
            <div className="ml-auto flex w-[26px] flex-col items-center justify-between bg-gradient-to-r from-[#f1f0e9] to-[#fefefb]">
              <ScrollBtn dir="up" disabled />
              <ScrollBtn dir="down" disabled />
            </div>
          </div>
          <div className="mt-[62px] flex items-start pl-[8px]">
            <div className="w-[180px]">
              <div className="h-[18px] pl-[3px] leading-[20px]"><Fit w={172}>Date/time of this action</Fit></div>
              <div className={"flex h-[32px] bg-white pl-[1px] " + SUNKEN}>
                <Fit w={34} className="leading-6">Now</Fit>
                <div className={"ml-auto flex h-[26px] w-[28px] items-center justify-center gap-[3px] pt-[6px] " + RAISED}>
                  {[0, 1, 2].map((i) => <div key={i} className="h-[3px] w-[3px] bg-black" />)}
                </div>
              </div>
            </div>
            <div className="ml-[26px] w-[342px]">
              <div className="h-[18px] pl-[5px] leading-[20px]"><Fit w={147}>Responsible Person</Fit></div>
              <div className={"flex h-[32px] bg-white pl-[2px] " + SUNKEN}>
                <Fit w={258} className="leading-6">Tanner,Craig Edward - PHYSICIAN</Fit>
                <div className="mr-[1px] ml-auto"><ComboArrow /></div>
              </div>
            </div>
          </div>
          <div className="mt-[41px] mr-[10px] flex justify-end gap-[15px]">
            <div className={"flex h-[35px] w-[118px] items-center justify-center border-r-3 border-b-3 " + RAISED}><Fit w={23}>OK</Fit></div>
            <div className={"flex h-[35px] w-[118px] items-center justify-center border-r-3 border-b-3 " + RAISED}><Fit w={52}>Cancel</Fit></div>
          </div>
        </div>
      </div>
    </div>
  );
}

/* Instruction box with a pointer towards the service list */
function Callout() {
  const line = "h-[90px] font-['Lato','Open_Sans',sans-serif] text-[33px] leading-[50px] font-bold";
  const mark = "underline decoration-2 underline-offset-[5px] [text-decoration-skip-ink:none]";
  return (
    <>
      <div className="absolute top-[399px] left-[598px] h-[246px] w-[829px] border-4 border-[#ff0000] bg-white pt-[2px] pl-[13px]">
        <div className={line}><Fit w={725} inner={mark}>Choose appropriate service (but not E-Consult)</Fit></div>
        <div className={line}><Fit w={418} inner={mark}>Enter Comments if Needed</Fit></div>
        <div className={line}><Fit w={731} inner={mark}>Now Consult Can be Scheduled via Usual Route</Fit></div>
      </div>
      <svg className="absolute top-[420px] left-[455px]" width="150" height="110" viewBox="0 0 150 110">
        <path d="M146 101 L12 9" stroke="#ff0000" strokeWidth="4" fill="none" />
        <path d="M22 25 L12 9 L32 12" stroke="#ff0000" strokeWidth="4.500" fill="none" strokeLinecap="round" strokeLinejoin="round" />
      </svg>
    </>
  );
}

export default function App() {
  return (
    <div className="relative flex h-[1601px] w-[2000px] flex-col overflow-hidden bg-[#ece9d8] font-['Liberation_Sans',Arial,sans-serif] text-[18px] leading-6 text-black">
      <MainHeader />
      <div className="flex h-[1312px] pl-[2px]">
        <LeftPane />
        <ReportPane />
      </div>
      <BottomTabs />
      <StatusBar />
      <Taskbar />
      <ForwardDialog />
      <Callout />
    </div>
  );
}
